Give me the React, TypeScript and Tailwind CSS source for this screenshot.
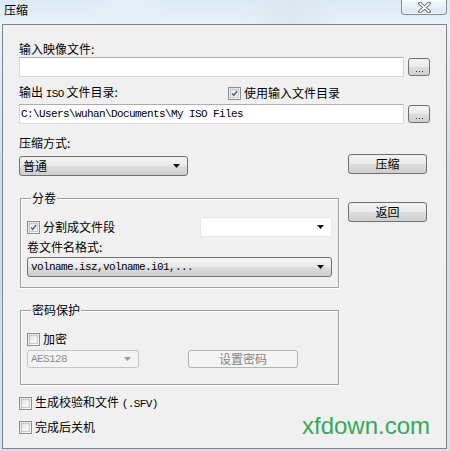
import type { ReactNode } from "react";

const cjk = "font-['Noto_Sans_CJK_SC','Noto_Sans',sans-serif]";
const mono = "font-['Liberation_Mono',monospace] text-[11px] tracking-[-0.6px]";

function Check({ checked, label }: { checked?: boolean; label: ReactNode }) {
  return (
    <label className="flex h-[14px] items-center gap-[3px]">
      <span className="flex h-[13px] w-[13px] items-center justify-center border border-[#8f8f8f] bg-[linear-gradient(135deg,#dcdcdc,#fbfbfb)]">
        <span className="flex h-[9px] w-[9px] items-center justify-center border border-[#c9c9c9] bg-[linear-gradient(135deg,#e6e6e6,#f7f7f7)]">
          {checked && (
            <svg width="9" height="9" viewBox="0 0 9 9">
              <path d="M1.5 4.5 L3.6 7 L7.8 1.3" fill="none" stroke="#3b5e9c" strokeWidth="1.7" />
            </svg>
          )}
        </span>
      </span>
      <span className="text-[12px] leading-[14px] text-black">{label}</span>
    </label>
  );
}

function Arrow({ color = "#111" }: { color?: string }) {
  return (
    <svg width="7" height="4" viewBox="0 0 7 4" className="shrink-0">
      <path d="M0 0 H7 L3.5 4 Z" fill={color} />
    </svg>
  );
}

function Dots() {
  return (
    <button className="flex h-[18px] w-[22px] items-end justify-center rounded-[3px] border border-[#707070] bg-[linear-gradient(#f2f2f2_0%,#ebebeb_50%,#dddddd_51%,#cfcfcf_100%)] pb-[3px]">
      <span className="flex gap-[2px]">
        <i className="block h-px w-px bg-[#333]" />
        <i className="block h-px w-px bg-[#333]" />
        <i className="block h-px w-px bg-[#333]" />
      </span>
    </button>
  );
}

function Btn({ children, w, disabled }: { children: ReactNode; w: string; disabled?: boolean }) {
  return (
    <button
      className={
        disabled
          ? `flex h-[18px] ${w} items-center justify-center rounded-[3px] border border-[#adb2b5] bg-[#f4f4f4] text-[12px] text-[#838383]`
          : `flex h-[20px] ${w} items-center justify-center rounded-[3px] border border-[#707070] bg-[linear-gradient(#f2f2f2_0%,#ebebeb_50%,#dddddd_51%,#cfcfcf_100%)] text-[12px] text-black`
      }
    >
      {children}
    </button>
  );
}

function Legend({ children }: { children: ReactNode }) {
  return <legend className="ml-[4px] px-px text-[12px] leading-[14px] text-black">{children}</legend>;
}

export default function App() {
  return (
    <div
      className={`relative h-[451px] w-[450px] overflow-hidden bg-[radial-gradient(circle_at_130px_12px,#e6f0f7_0,transparent_40px),radial-gradient(circle_at_290px_10px,#dbe6ee_0,transparent_50px),linear-gradient(180deg,#dce9f6_0%,#eaf2fa_6%,#cadcef_40%,#d4e3f2_100%)] ${cjk}`}
    >
      {/* title bar */}
      <div className="flex h-[24px] items-start justify-between">
        <span className="pl-[4px] pt-[2px] text-[12px] leading-[16px] text-black">压缩</span>
        <div className="mr-[3px] flex h-[15px] w-[46px] items-center justify-center rounded-b-[4px] border border-t-0 border-[#7c8a9b] bg-[linear-gradient(#f4f8fc,#dbe6f2)] shadow-[inset_0_0_0_1px_rgba(255,255,255,0.7)]">
          <svg width="15" height="11" viewBox="0 0 15 11">
            <path d="M3 1.5 L12 9.5 M12 1.5 L3 9.5" stroke="#4a5563" strokeWidth="3.6" strokeLinecap="round" />
            <path d="M3 1.5 L12 9.5 M12 1.5 L3 9.5" stroke="#ffffff" strokeWidth="1.8" strokeLinecap="round" />
          </svg>
        </div>
      </div>

      {/* client area */}
      <div className="ml-[2px] h-[425px] w-[445px] border border-[#80858c] bg-[#f0f0f0] px-[16px] text-[12px] leading-[14px] text-black">
        <div className="mt-[17px] h-[14px]">输入映像文件:</div>
        <div className="mt-px flex items-center gap-[4px]">
          <div className="h-[20px] w-[385px] border border-[#d5d9de] border-t-[#abadb3] bg-white" />
          <Dots />
        </div>

        <div className="mt-[9px] flex h-[14px] items-center">
          <div className="w-[209px]">
            输出 <span className={mono}>ISO</span> 文件目录:
          </div>
          <Check checked label="使用输入文件目录" />
        </div>
        <div className="mt-[4px] flex items-center gap-[4px]">
          <div className={`flex h-[20px] w-[385px] items-center border border-[#d5d9de] border-t-[#abadb3] bg-white pl-px ${mono}`}>
            C:\Users\wuhan\Documents\My ISO Files
          </div>
          <Dots />
        </div>

        <div className="mt-[12px] flex">
          <div className="w-[320px]">
            <div className="h-[14px]">压缩方式:</div>
            <div className="mt-[6px] flex h-[20px] w-[169px] items-center justify-between rounded-[3px] border border-[#707070] bg-[linear-gradient(#f2f2f2_0%,#ebebeb_50%,#dddddd_51%,#cfcfcf_100%)] pl-[3px] pr-[7px]">
              <span>普通</span>
              <Arrow />
            </div>

            <fieldset className="mt-[15px] ml-px w-[319px] border border-[#a0a0a0] pb-[10px] pl-[6px] pr-[6px] shadow-[1px_1px_0_#fff,inset_1px_1px_0_#fff]">
              <Legend>分卷</Legend>
              <div className="mt-[12px] flex h-[20px] items-center justify-between">
                <Check checked label="分割成文件段" />
                <div className="flex h-[20px] w-[132px] items-center justify-end rounded-[2px] border border-[#e3e9ef] bg-white pr-[7px]">
                  <Arrow />
                </div>
              </div>
              <div className="mt-[3px] h-[14px]">卷文件名格式:</div>
              <div className="mt-[3px] flex h-[20px] w-[305px] items-center justify-between rounded-[3px] border border-[#707070] bg-[linear-gradient(#f2f2f2_0%,#ebebeb_50%,#dddddd_51%,#cfcfcf_100%)] pl-[3px] pr-[7px]">
                <span className={mono}>volname.isz,volname.i01,...</span>
                <Arrow />
              </div>
            </fieldset>

            <fieldset className="mt-[15px] ml-px w-[319px] border border-[#a0a0a0] pb-[16px] pl-[6px] pr-[6px] shadow-[1px_1px_0_#fff,inset_1px_1px_0_#fff]">
              <Legend>密码保护</Legend>
              <div className="mt-[15px]">
                <Check label="加密" />
              </div>
              <div className="mt-[4px] flex items-center">
                <div className="flex h-[18px] w-[112px] items-center justify-between rounded-[3px] border border-[#c3c6c9] bg-[#f4f4f4] pl-[3px] pr-[7px] text-[#8d8d8d]">
                  <span className={mono}>AES128</span>
                  <Arrow color="#9a9a9a" />
                </div>
                <div className="ml-[49px]">
                  <Btn w="w-[110px]" disabled>
                    设置密码
                  </Btn>
                </div>
              </div>
            </fieldset>

            <div className="mt-[11px]">
              <Check
                label={
                  <>
                    生成校验和文件 <span className={mono}>(.SFV)</span>
                  </>
                }
              />
            </div>
            <div className="mt-[10px]">
              <Check label="完成后关机" />
            </div>
          </div>

          <div className="ml-[9px]">
            <div className="mt-[18px]">
              <Btn w="w-[79px]">压缩</Btn>
            </div>
            <div className="mt-[28px]">
              <Btn w="w-[79px]">返回</Btn>
            </div>
          </div>
        </div>
      </div>

      <span className="absolute left-[302px] top-[412px] font-['Liberation_Sans',sans-serif] text-[24px] leading-[28px] text-[#35a95b]">
        xfdown.com
      </span>
    </div>
  );
}
